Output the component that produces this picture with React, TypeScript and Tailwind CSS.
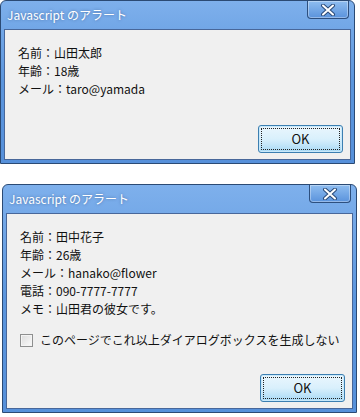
import React from "react"

const font = { fontFamily: '"Noto Sans CJK JP", "Noto Sans", sans-serif' }

function CloseButton() {
  return (
    <div className="absolute top-0 right-[5px] flex h-[18px] w-[42px] items-center justify-center rounded-b-[4px] border border-t-0 border-[#2d4f7e] bg-gradient-to-b from-[#8fbdf0] to-[#5a93dc] shadow-[inset_0_0_0_1px_rgba(255,255,255,0.35)]">
      <svg width="16" height="12" viewBox="0 0 16 12">
        <path d="M3 1.5 L13 10.5 M13 1.5 L3 10.5" stroke="#2a4a78" strokeWidth="4" strokeLinecap="round" />
        <path d="M3 1.5 L13 10.5 M13 1.5 L3 10.5" stroke="#ffffff" strokeWidth="2" strokeLinecap="round" />
      </svg>
    </div>
  )
}

function OkButton() {
  return (
    <button className="flex h-[28px] w-[85px] items-center justify-center rounded-[3px] border border-[#3c7fb1] bg-gradient-to-b from-[#eaf6fd] via-[#d9f0fc] to-[#a7d9f5] p-[2px] shadow-[inset_0_0_0_1px_#c8e8fa]">
      <span className="flex h-full w-full items-center justify-center border border-dotted border-[#222] text-[13px] text-[#111]">
        OK
      </span>
    </button>
  )
}

function Dialog({ className, lines, checkbox }: { className: string; lines: string[]; checkbox?: boolean }) {
  return (
    <div
      className={`relative flex flex-col rounded-t-[6px] border border-[#2b4a74] bg-gradient-to-b from-[#7eb0ec] via-[#5b95dd] to-[#5690da] ${className}`}
      style={font}
    >
      <div className="flex h-[28px] shrink-0 items-center pl-[6px] text-[12px] text-white [text-shadow:0_0_3px_rgba(40,70,120,0.6)]">
        Javascript のアラート
      </div>
      <CloseButton />
      <div className="mx-[3px] mb-[3px] flex flex-1 flex-col border border-[#48679a] bg-[#f0f0f0] pl-[13px] pr-[7px] pt-[14px] pb-[6px]">
        {lines.map((l) => (
          <div key={l} className="h-[18px] text-[12px] leading-[18px] text-[#111]">
            {l}
          </div>
        ))}
        {checkbox && (
          <div className="mt-[13px] flex items-center gap-[7px] text-[12px] text-[#111]">
            <span className="h-[13px] w-[13px] border border-[#8e8f8f] bg-gradient-to-br from-[#dcdcdc] to-[#fbfbfb] shadow-[inset_0_0_0_1px_#f4f4f4]" />
            <span>このページでこれ以上ダイアログボックスを生成しない</span>
          </div>
        )}
        <div className="mt-auto flex justify-end">
          <OkButton />
        </div>
      </div>
    </div>
  )
}

export default function App() {
  return (
    <div className="flex h-[417px] w-[360px] flex-col bg-white">
      <Dialog
        className="h-[164px] w-[355px]"
        lines={["名前：山田太郎", "年齢：18歳", "メール：taro@yamada"]}
      />
      <Dialog
        className="ml-[2px] mt-[20px] h-[229px] w-[355px]"
        lines={["名前：田中花子", "年齢：26歳", "メール：hanako@flower", "電話：090-7777-7777", "メモ：山田君の彼女です。"]}
        checkbox
      />
    </div>
  )
}
